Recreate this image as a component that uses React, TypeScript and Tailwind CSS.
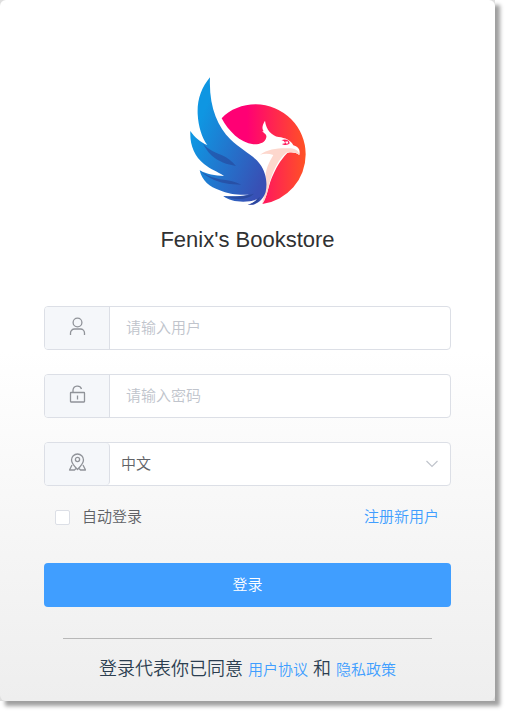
import type { ReactNode } from "react";

function Logo() {
  return (
    <svg viewBox="0 0 405 420" className="h-[140px] w-[135px]" role="img" aria-label="Fenix">
      <defs>
        <linearGradient id="sun" gradientUnits="userSpaceOnUse" x1="125" y1="0" x2="377" y2="0">
          <stop offset="0.3" stopColor="#ff0074" />
          <stop offset="1" stopColor="#ff5225" />
        </linearGradient>
        <linearGradient id="wing" gradientUnits="userSpaceOnUse" x1="40" y1="200" x2="262" y2="290">
          <stop offset="0" stopColor="#0f96e2" />
          <stop offset="1" stopColor="#3850b5" />
        </linearGradient>
        <linearGradient id="shade" gradientUnits="userSpaceOnUse" x1="60" y1="230" x2="230" y2="380">
          <stop offset="0" stopColor="#1f62b8" />
          <stop offset="1" stopColor="#2c479d" />
        </linearGradient>
      </defs>
      <path
        fill="url(#sun)"
        d="M125 145C150 118 188 103 227 103A150 150 0 0 1 377 253A150 150 0 0 1 247 402C262 381 264 350 276 322C288 294 300 272 322 249C336 246 350 248 358 255C362 240 354 229 340 226C333 211 315 203 296 201C276 197 258 180 255 152C246 166 245 178 252 184L247 183C250 190 261 191 259 202C256 218 239 224 220 223C180 218 145 183 125 145Z"
      />
      <path
        fill="#fdd7cd"
        d="M240 254C263 237 296 234 324 235C343 235 356 240 358 255C348 247 333 244 319 248C296 267 283 296 272 326C264 354 261 382 247 401C250 382 260 357 258 330C253 301 268 276 280 255C267 250 252 250 240 254Z"
      />
      <path fill="#ff1c5b" d="M304 211C314 206 329 209 329 220C325 226 312 227 306 222L315 220C315 214 309 211 304 211Z" />
      <path fill="#fff" d="M315 215L323 214L325 220L319 221Z" />
      <path
        fill="url(#wing)"
        d="M90 22C64 53 51 90 53 132C55 170 66 204 82 225C61 217 44 202 31 183C29 225 43 259 72 282C91 298 112 304 132 318C104 317 81 313 59 301C66 332 89 351 119 361C143 372 177 376 207 374C183 378 159 380 130 378C148 393 176 397 209 394C219 392 224 390 231 388C224 397 213 403 203 404C230 408 249 390 257 366C263 337 258 306 239 281C218 254 181 238 151 208C112 170 86 108 90 22Z"
      />
      <path fill="url(#shade)" d="M67 218C79 234 101 246 123 254C143 262 157 274 168 288C141 284 115 275 94 256C83 245 74 231 67 218Z" />
      <path fill="url(#shade)" d="M59 301C82 320 112 328 142 331C158 333 171 338 184 344C152 344 119 340 92 325C76 317 66 309 59 301Z" />
      <path fill="url(#shade)" d="M130 378C158 382 194 379 222 371C214 381 191 389 168 387C153 386 141 383 130 378Z" />
      <path fill="url(#shade)" d="M203 404C219 400 230 391 239 380C239 397 222 406 203 404Z" />
    </svg>
  );
}

function Icon({ children }: { children: ReactNode }) {
  return (
    <svg
      viewBox="0 0 18 18"
      className="mb-1 size-[18px]"
      fill="none"
      stroke="#909399"
      strokeWidth="1.3"
      strokeLinejoin="round"
      aria-hidden="true"
    >
      {children}
    </svg>
  );
}

function Field({ id, label, icon, rounded, children }: { id: string; label: string; icon: ReactNode; rounded?: boolean; children: ReactNode }) {
  return (
    <div className="flex h-11 overflow-hidden rounded border border-[#dcdfe6] bg-white">
      <label
        htmlFor={id}
        aria-label={label}
        className={
          rounded
            ? "flex w-[65px] shrink-0 items-center justify-center rounded-r border-r border-[#dcdfe6] bg-[#f5f7fa]"
            : "flex w-[65px] shrink-0 items-center justify-center border-r border-[#dcdfe6] bg-[#f5f7fa]"
        }
      >
        {icon}
      </label>
      {children}
    </div>
  );
}

export default function App() {
  return (
    <div className="pr-[10px] pb-[10px] font-['Liberation_Sans','Noto_Sans_CJK_SC',sans-serif] text-[15px] leading-5 font-[350]">
      <main className="bg-[#dedede] shadow-[5px_5px_4px_#a0a0a0]">
        <form
          className="flex flex-col rounded-md bg-linear-to-b from-white from-50% to-[#eee] px-11 pb-[19px]"
          onSubmit={(e) => e.preventDefault()}
        >
          <header className="flex flex-col items-center pt-[70px]">
            <Logo />
            <h1 className="mt-4 text-[22px] leading-7 text-[#303133]">Fenix's Bookstore</h1>
          </header>

          <div className="mt-[52px] flex flex-col gap-6">
            <Field
              id="account"
              label="用户"
              icon={
                <Icon>
                  <circle cx="9.5" cy="5.5" r="4.4" />
                  <path d="M2.5 18V16a4 4 0 0 1 4-4h6a4 4 0 0 1 4 4v2" />
                </Icon>
              }
            >
              <input
                id="account"
                type="text"
                placeholder="请输入用户"
                className="min-w-0 flex-1 px-4 text-[#606266] outline-none placeholder:text-[#c0c4cc]"
              />
            </Field>
            <Field
              id="password"
              label="密码"
              icon={
                <Icon>
                  <rect x="2.5" y="7.5" width="14" height="9.5" rx="0.5" />
                  <path d="M5 7.500V5a4.400 4.400 0 0 1 8.500-1M9.500 10.500v4" />
                </Icon>
              }
            >
              <input
                id="password"
                type="password"
                placeholder="请输入密码"
                className="min-w-0 flex-1 px-4 text-[#606266] outline-none placeholder:text-[#c0c4cc]"
              />
            </Field>
            <Field
              id="language"
              label="语言"
              rounded
              icon={
                <Icon>
                  <path d="M9.500 16.500C6 13 3.500 10 3.500 7a6 6 0 0 1 12 0c0 3-2.500 6-6 9.500Z" />
                  <circle cx="9.5" cy="6.5" r="2.1" />
                  <path d="M4 12L1.500 17h5L8 15.500M15 12l2.500 5h-5L11 15.500" />
                </Icon>
              }
            >
              <div className="grid min-w-0 flex-1 items-center">
                <select
                  id="language"
                  className="col-start-1 row-start-1 h-full w-full appearance-none bg-transparent pr-10 pl-[11px] text-[#606266] outline-none"
                >
                  <option>中文</option>
                  <option>English</option>
                </select>
                <svg
                  viewBox="0 0 12 8"
                  className="pointer-events-none col-start-1 row-start-1 mr-3 h-2 w-3 justify-self-end"
                  fill="none"
                  stroke="#c0c4cc"
                  strokeWidth="1.2"
                  aria-hidden="true"
                >
                  <path d="M0.500 1L6 6.500L11.500 1" />
                </svg>
              </div>
            </Field>
          </div>

          <div className="mt-[21px] flex items-center justify-between pr-3 pl-[11px]">
            <label className="flex items-center gap-3 text-[#606266]">
              <input
                type="checkbox"
                className="size-[15px] appearance-none rounded-xs border border-[#dcdfe6] bg-white checked:bg-[#409eff]"
              />
              自动登录
            </label>
            <a href="#register" className="text-[#409eff]">
              注册新用户
            </a>
          </div>

          <button type="submit" className="mt-9 h-11 rounded bg-[#409eff] text-white">
            登录
          </button>

          <footer className="mx-[19px] mt-[31px] border-t border-[#b8b8b8] pt-[18px] text-center text-lg leading-6 whitespace-nowrap text-[#2c3e50]">
            登录代表你已同意{" "}
            <a href="#terms" className="text-[15px] text-[#409eff]">
              用户协议
            </a>{" "}
            和{" "}
            <a href="#privacy" className="text-[15px] text-[#409eff]">
              隐私政策
            </a>
          </footer>
        </form>
      </main>
    </div>
  );
}
